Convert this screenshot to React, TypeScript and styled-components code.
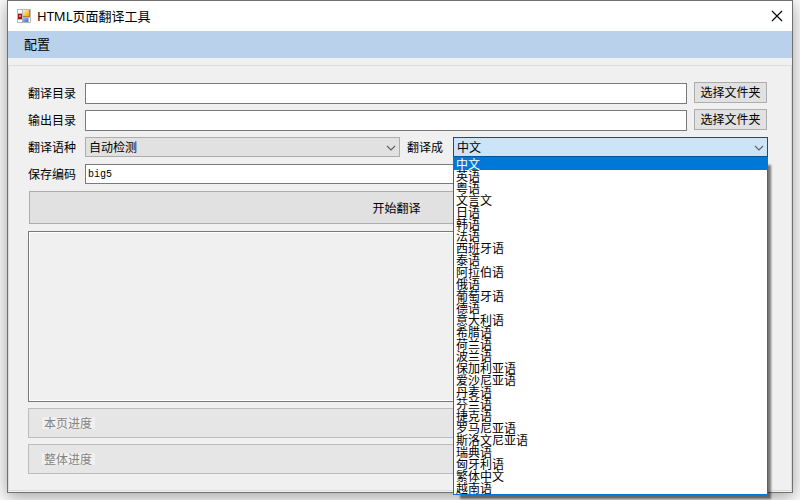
import React from "react";
import styled, { createGlobalStyle, css } from "styled-components";

const Global = createGlobalStyle`
  *, *::before, *::after { box-sizing: border-box; }
  body {
    margin: 0;
    min-height: 100vh;
    background: #fbfbfb;
    overflow: hidden;
    color: #000;
    font-family: "Liberation Sans", "Noto Sans CJK SC", sans-serif;
    font-size: 12px;
  }
  button, input, select, textarea { font: inherit; color: inherit; border-radius: 0; margin: 0; outline: none; }
`;

const Window = styled.main`
  margin: 0 7px;
  background: #f0f0f0;
  border: 1px solid #707070;
  box-shadow: 0 4px 16px rgba(0, 0, 0, 0.36);
  padding-bottom: 1px;
`;

const TitleBar = styled.header`
  display: flex;
  align-items: center;
  height: 30px;
  padding: 0 9px;
  background: #fff;
`;

const Title = styled.h1`
  flex: 1;
  margin: 0 0 0 6px;
  font: 400 13px/18px "Noto Sans", "Noto Sans CJK SC", sans-serif;
`;

const CloseButton = styled.button`
  display: flex;
  padding: 0;
  border: 0;
  background: none;
`;

const MenuBar = styled.nav`
  display: flex;
  align-items: center;
  height: 27px;
  padding: 0 16px;
  background: #b9d1ea;
`;

const MenuItem = styled.button`
  padding: 0;
  border: 0;
  background: none;
  font-size: 13px;
  line-height: 20px;
`;

const Panel = styled.section`
  display: flex;
  flex-direction: column;
  gap: 6px;
  margin-top: 7px;
  padding: 16px 23px 16px 19px;
  border: 1px solid #dcdcdc;
`;

const Form = styled.div`
  display: flex;
  flex-direction: column;
  gap: 5px;
`;

const Row = styled.div`
  display: flex;
  align-items: center;
  height: 22px;
`;

const Label = styled.label<{ $inline?: boolean }>`
  flex: none;
  width: ${(p) => (p.$inline ? 53 : 57)}px;
  padding: 2px 0 0 ${(p) => (p.$inline ? 7 : 0)}px;
  line-height: 20px;
  white-space: nowrap;
`;

const TextInput = styled.input<{ $path?: boolean }>`
  flex: 1;
  min-width: 0;
  height: ${(p) => (p.$path ? 21 : 20)}px;
  align-self: ${(p) => (p.$path ? "flex-end" : "center")};
  padding: 0 2px;
  border: 1px solid #7a7a7a;
  background: #fff;
  font-family: "Liberation Mono", monospace;
  font-size: 10px;
`;

const buttonFace = css`
  padding: 0;
  border: 1px solid #adadad;
  background: #e1e1e1;
`;

const FolderButton = styled.button`
  ${buttonFace}
  flex: none;
  align-self: flex-start;
  width: 73px;
  height: 21px;
  margin: 0 1px 0 7px;
  line-height: 18px;
`;

const StartButton = styled.button`
  ${buttonFace}
  height: 33px;
  margin: 0 4px 1px 1px;
`;

const Combo = styled.div`
  position: relative;
  display: flex;
  flex: 1;
  min-width: 0;
  height: 20px;
`;

const Select = styled.select<{ $open?: boolean }>`
  appearance: none;
  width: 100%;
  padding: 1px 20px 0 3px;
  line-height: 18px;
  border: 1px solid ${(p) => (p.$open ? "#005499" : "#adadad")};
  background: ${(p) => (p.$open ? "#cce4f7" : "#e1e1e1")};
`;

const Arrow = styled.svg`
  position: absolute;
  right: 4px;
  top: 8px;
  pointer-events: none;
`;

const Options = styled.ul`
  position: absolute;
  z-index: 1;
  top: 100%;
  left: 0;
  width: 100%;
  margin: 0;
  padding: 0;
  list-style: none;
  border: 1px solid #0078d7;
  background: #fff;
  box-shadow: 5px 6px 2px -2px rgba(0, 0, 0, 0.5);
`;

const Option = styled.li`
  height: 12px;
  padding-left: 2px;
  line-height: 14px;
  white-space: nowrap;

  &[aria-selected="true"] {
    background: #0078d7;
    color: #fff;
  }
`;

const Log = styled.textarea`
  display: block;
  width: 100%;
  height: 171px;
  padding: 2px;
  resize: none;
  border: 1px solid #7a7a7a;
  background: #f0f0f0;
  box-shadow: inset 0 0 0 1px #fff;
`;

const Progress = styled.div`
  display: flex;
  align-items: center;
  height: 30px;
  padding-left: 13px;
  border: 1px solid #bcbcbc;
  background: #e6e6e6;
`;

const ProgressLabel = styled.span`
  width: 53px;
  height: 12px;
  padding-left: 2px;
  line-height: 14px;
  background: #f0f0f0;
  color: #838383;
`;

const languages = [
  "中文", "英语", "粤语", "文言文", "日语", "韩语", "法语",
  "西班牙语", "泰语", "阿拉伯语", "俄语", "葡萄牙语", "德语", "意大利语",
  "希腊语", "荷兰语", "波兰语", "保加利亚语", "爱沙尼亚语", "丹麦语", "芬兰语",
  "捷克语", "罗马尼亚语", "斯洛文尼亚语", "瑞典语", "匈牙利语", "繁体中文", "越南语",
];

function AppIcon() {
  return (
    <svg width="14" height="14" viewBox="0 0 14 14" shapeRendering="crispEdges" aria-hidden="true">
      <defs>
        <linearGradient id="gold" x2="1" y2="1">
          <stop stopColor="#fff3a8" />
          <stop offset="1" stopColor="#efab08" />
        </linearGradient>
        <linearGradient id="blue" x2="1" y2="1">
          <stop stopColor="#8dbcff" />
          <stop offset="1" stopColor="#3477dc" />
        </linearGradient>
      </defs>
      <rect width="14" height="14" fill="#b9b9bd" />
      <path d="M1 1h4v3h-4zM1 11h4v2h-4zM12 9h1v4h-1z" fill="#fff" />
      <rect x="6" y="1" width="7" height="7" fill="#b98516" />
      <rect x="6" y="1" width="6" height="6" fill="url(#gold)" />
      <rect x="1" y="5" width="4" height="5" fill="#a81212" />
      <rect x="2" y="6" width="2" height="2" fill="#ef7664" />
      <rect x="6" y="9" width="5" height="4" fill="url(#blue)" />
    </svg>
  );
}

function Chevron() {
  return (
    <Arrow width="10" height="7" viewBox="0 0 10 7" fill="none" stroke="#606060" aria-hidden="true">
      <path d="M1 1l4 4 4-4" strokeWidth="1.1" />
    </Arrow>
  );
}

function PathRow({ id, label }: { id: string; label: string }) {
  return (
    <Row>
      <Label htmlFor={id}>{label}</Label>
      <TextInput id={id} $path />
      <FolderButton type="button">选择文件夹</FolderButton>
    </Row>
  );
}

function ProgressRow({ id, label }: { id: string; label: string }) {
  return (
    <Progress role="progressbar" aria-labelledby={id} aria-valuenow={0}>
      <ProgressLabel id={id}>{label}</ProgressLabel>
    </Progress>
  );
}

export default function App() {
  return (
    <>
      <Global />
      <Window>
        <TitleBar>
          <AppIcon />
          <Title>HTML页面翻译工具</Title>
          <CloseButton type="button" aria-label="关闭">
            <svg width="12" height="12" viewBox="0 0 12 12" stroke="#000" strokeWidth="1.1">
              <path d="M1 1l10 10M11 1L1 11" />
            </svg>
          </CloseButton>
        </TitleBar>
        <MenuBar>
          <MenuItem type="button">配置</MenuItem>
        </MenuBar>
        <Panel>
          <Form>
            <PathRow id="source-dir" label="翻译目录" />
            <PathRow id="output-dir" label="输出目录" />
            <Row>
              <Label htmlFor="from">翻译语种</Label>
              <Combo>
                <Select id="from">
                  <option>自动检测</option>
                </Select>
                <Chevron />
              </Combo>
              <Label htmlFor="to" $inline>翻译成</Label>
              <Combo>
                <Select id="to" $open defaultValue="中文">
                  {languages.map((name) => <option key={name}>{name}</option>)}
                </Select>
                <Chevron />
                <Options role="listbox" aria-label="翻译成">
                  {languages.map((name, i) => (
                    <Option key={name} role="option" aria-selected={i === 0}>{name}</Option>
                  ))}
                </Options>
              </Combo>
            </Row>
            <Row>
              <Label htmlFor="encoding">保存编码</Label>
              <TextInput id="encoding" defaultValue="big5" />
            </Row>
          </Form>
          <StartButton type="button">开始翻译</StartButton>
          <Log readOnly aria-label="日志" />
          <ProgressRow id="page-progress" label="本页进度" />
          <ProgressRow id="total-progress" label="整体进度" />
        </Panel>
      </Window>
    </>
  );
}
